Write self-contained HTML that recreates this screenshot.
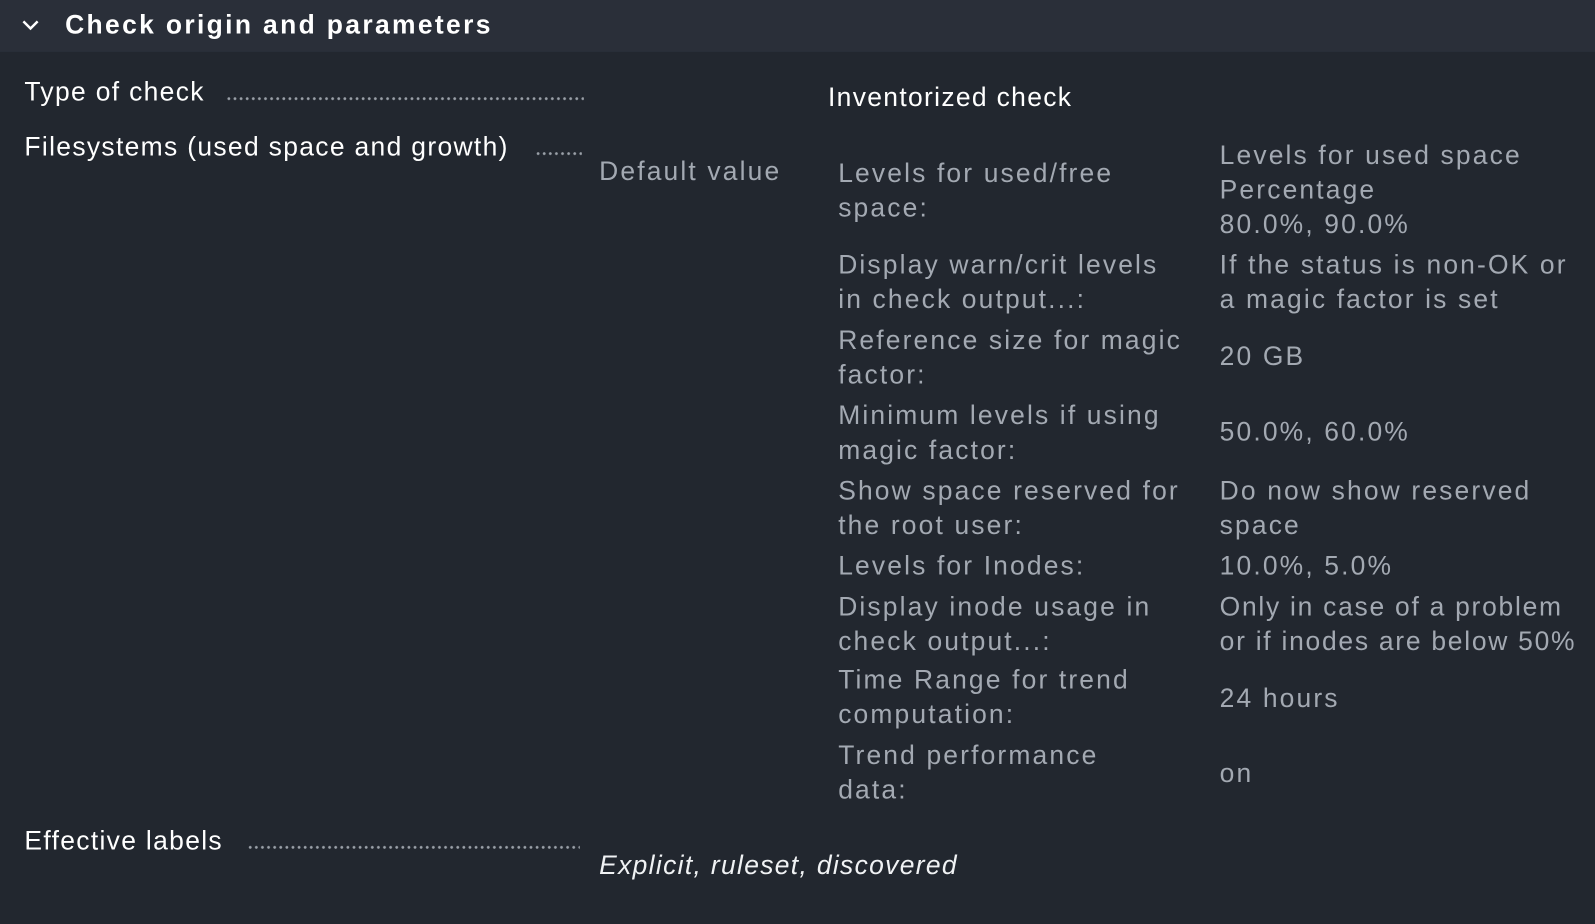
<!DOCTYPE html>
<html><head><meta charset="utf-8"><style>
html,body{margin:0;padding:0;background:#22272f;width:1595px;height:924px;overflow:hidden}
#w{position:absolute;left:0;top:0;width:1568px;height:908px;transform:scale(1.01722);transform-origin:0 0;font-family:"Liberation Sans",sans-serif;}
#hd{position:absolute;left:0;top:0;width:1568px;height:51px;background:#2a2f39}
.t{position:absolute;white-space:nowrap;line-height:34px;font-size:26px}
.w{color:#ffffff;letter-spacing:1.3px}
.g{color:#a3a9b2;letter-spacing:2.1px}
.d{position:absolute;height:4px;background-image:radial-gradient(circle,#9aa0a8 1.2px,transparent 1.6px);background-size:6px 4px}
</style></head><body><div id="w">
<div id="hd"></div>
<svg style="position:absolute;left:20px;top:18px" width="20" height="14" viewBox="0 0 20 14"><path d="M3 3 L10 10 L17 3" fill="none" stroke="#fff" stroke-width="2.4"/></svg>
<div class="t" style="left:64px;top:7px;color:#fff;font-weight:bold;font-size:26px;letter-spacing:2.3px">Check origin and parameters</div>

<div class="t w" style="left:24px;top:73px">Type of check</div>
<div class="d" style="left:222px;top:95px;width:352px"></div>
<div class="t w" style="left:814px;top:78px">Inventorized check</div>

<div class="t w" style="left:24px;top:127px">Filesystems (used space and growth)</div>
<div class="d" style="left:526px;top:149px;width:46px"></div>
<div class="t g" style="left:589px;top:151px">Default value</div>

<div class="t g" style="left:824px;top:153px">Levels for used/free<br>space:</div>
<div class="t g" style="left:1199px;top:135px">Levels for used space<br>Percentage<br>80.0%, 90.0%</div>

<div class="t g" style="left:824px;top:243px">Display warn/crit levels<br>in check output...:</div>
<div class="t g" style="left:1199px;top:243px">If the status is non-OK or<br>a magic factor is set</div>

<div class="t g" style="left:824px;top:317px">Reference size for magic<br>factor:</div>
<div class="t g" style="left:1199px;top:333px">20 GB</div>

<div class="t g" style="left:824px;top:391px">Minimum levels if using<br>magic factor:</div>
<div class="t g" style="left:1199px;top:407px">50.0%, 60.0%</div>

<div class="t g" style="left:824px;top:465px">Show space reserved for<br>the root user:</div>
<div class="t g" style="left:1199px;top:465px">Do now show reserved<br>space</div>

<div class="t g" style="left:824px;top:539px">Levels for Inodes:</div>
<div class="t g" style="left:1199px;top:539px">10.0%, 5.0%</div>

<div class="t g" style="left:824px;top:579px">Display inode usage in<br>check output...:</div>
<div class="t g" style="left:1199px;top:579px;letter-spacing:1.7px">Only in case of a problem<br>or if inodes are below 50%</div>

<div class="t g" style="left:824px;top:651px">Time Range for trend<br>computation:</div>
<div class="t g" style="left:1199px;top:669px">24 hours</div>

<div class="t g" style="left:824px;top:725px">Trend performance<br>data:</div>
<div class="t g" style="left:1199px;top:743px">on</div>

<div class="t w" style="left:24px;top:809px">Effective labels</div>
<div class="d" style="left:243px;top:831px;width:327px"></div>
<div class="t w" style="left:589px;top:833px;font-style:italic;color:#f0f2f4">Explicit, ruleset, discovered</div>
</div></body></html>
